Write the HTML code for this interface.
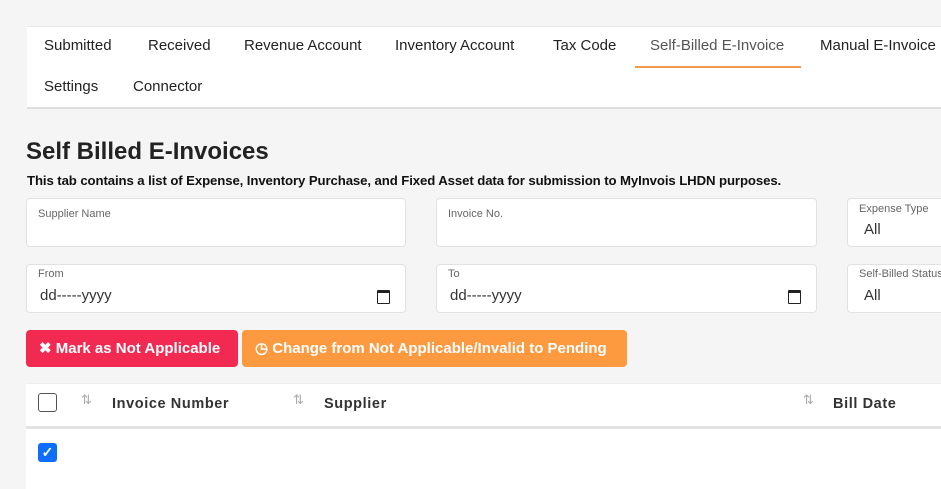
<!DOCTYPE html><html><head><style>
body{margin:0;width:941px;height:480px;background:#f5f5f5;font-family:"Liberation Sans",sans-serif;position:relative;overflow:hidden;color:#222}
.a{position:absolute;white-space:nowrap}
.nav{left:27px;top:26px;width:930px;height:80px;background:#fff;border-top:1px solid #e8e8e8;border-bottom:2px solid #ddd}
.tab{font-size:15px;color:#222}
.box{background:#fff;border:1px solid #e2e2e2;border-radius:4px;height:47px}
.lbl{font-size:11px;color:#666}
.val{font-size:15px;color:#333}
.btn{color:#fff;font-size:15px;font-weight:bold;border-radius:4px;height:37px;line-height:37px}
.th{font-size:14.5px;font-weight:bold;color:#333;letter-spacing:.6px}
.srt{font-size:13px;color:#aaa}
.cal{width:11px;height:10px;border:1.5px solid #222;border-top-width:3px;border-radius:1px}
</style></head><body>
<div class="a nav"></div>
<div class="a tab" style="left:44px;top:37px">Submitted</div>
<div class="a tab" style="left:148px;top:37px">Received</div>
<div class="a tab" style="left:244px;top:37px">Revenue Account</div>
<div class="a tab" style="left:395px;top:37px">Inventory Account</div>
<div class="a tab" style="left:553px;top:37px">Tax Code</div>
<div class="a tab" style="left:650px;top:37px;color:#555">Self-Billed E-Invoice</div>
<div class="a" style="left:635px;top:66px;width:166px;height:2px;background:#f09a4a"></div>
<div class="a tab" style="left:820px;top:37px">Manual E-Invoice</div>
<div class="a tab" style="left:44px;top:78px">Settings</div>
<div class="a tab" style="left:133px;top:78px">Connector</div>
<div class="a" style="left:26px;top:138px;font-size:24px;font-weight:bold;color:#222">Self Billed E-Invoices</div>
<div class="a" style="left:27px;top:173px;font-size:13.2px;font-weight:bold;color:#111;letter-spacing:-.1px">This tab contains a list of Expense, Inventory Purchase, and Fixed Asset data for submission to MyInvois LHDN purposes.</div>

<div class="a box" style="left:26px;top:198px;width:378px"></div>
<div class="a lbl" style="left:38px;top:208px">Supplier Name</div>
<div class="a box" style="left:436px;top:198px;width:379px"></div>
<div class="a lbl" style="left:448px;top:208px">Invoice No.</div>
<div class="a box" style="left:847px;top:198px;width:120px"></div>
<div class="a lbl" style="left:859px;top:203px">Expense Type</div>
<div class="a val" style="left:864px;top:221px">All</div>

<div class="a box" style="left:26px;top:264px;width:378px"></div>
<div class="a lbl" style="left:38px;top:268px">From</div>
<div class="a val" style="left:40px;top:287px">dd-----yyyy</div>
<div class="a cal" style="left:377px;top:290px"></div>
<div class="a box" style="left:436px;top:264px;width:379px"></div>
<div class="a lbl" style="left:448px;top:268px">To</div>
<div class="a val" style="left:450px;top:287px">dd-----yyyy</div>
<div class="a cal" style="left:788px;top:290px"></div>
<div class="a box" style="left:847px;top:264px;width:120px"></div>
<div class="a lbl" style="left:859px;top:268px">Self-Billed Status</div>
<div class="a val" style="left:864px;top:287px">All</div>

<div class="a btn" style="left:26px;top:330px;width:212px;background:#f22a52"><span style="margin-left:13px">✖ Mark as Not Applicable</span></div>
<div class="a btn" style="left:242px;top:330px;width:385px;background:#fd9a40"><span style="margin-left:13px">◷ Change from Not Applicable/Invalid to Pending</span></div>

<div class="a" style="left:26px;top:383px;width:930px;height:43px;background:#fff;border-top:1px solid #eee"></div>
<div class="a" style="left:26px;top:426px;width:930px;height:3px;background:#e3e3e3"></div>
<div class="a" style="left:26px;top:429px;width:930px;height:60px;background:#fff"></div>
<div class="a" style="left:38px;top:393px;width:17px;height:17px;border:1.5px solid #555;border-radius:3px"></div>
<div class="a srt" style="left:81px;top:392px">⇅</div>
<div class="a th" style="left:112px;top:396px">Invoice Number</div>
<div class="a srt" style="left:293px;top:392px">⇅</div>
<div class="a th" style="left:324px;top:396px">Supplier</div>
<div class="a srt" style="left:803px;top:392px">⇅</div>
<div class="a th" style="left:833px;top:396px">Bill Date</div>
<div class="a" style="left:38px;top:443px;width:19px;height:19px;background:#0d6efd;border-radius:3px;color:#fff;font-size:14px;line-height:19px;text-align:center;font-weight:bold">✓</div>
</body></html>
